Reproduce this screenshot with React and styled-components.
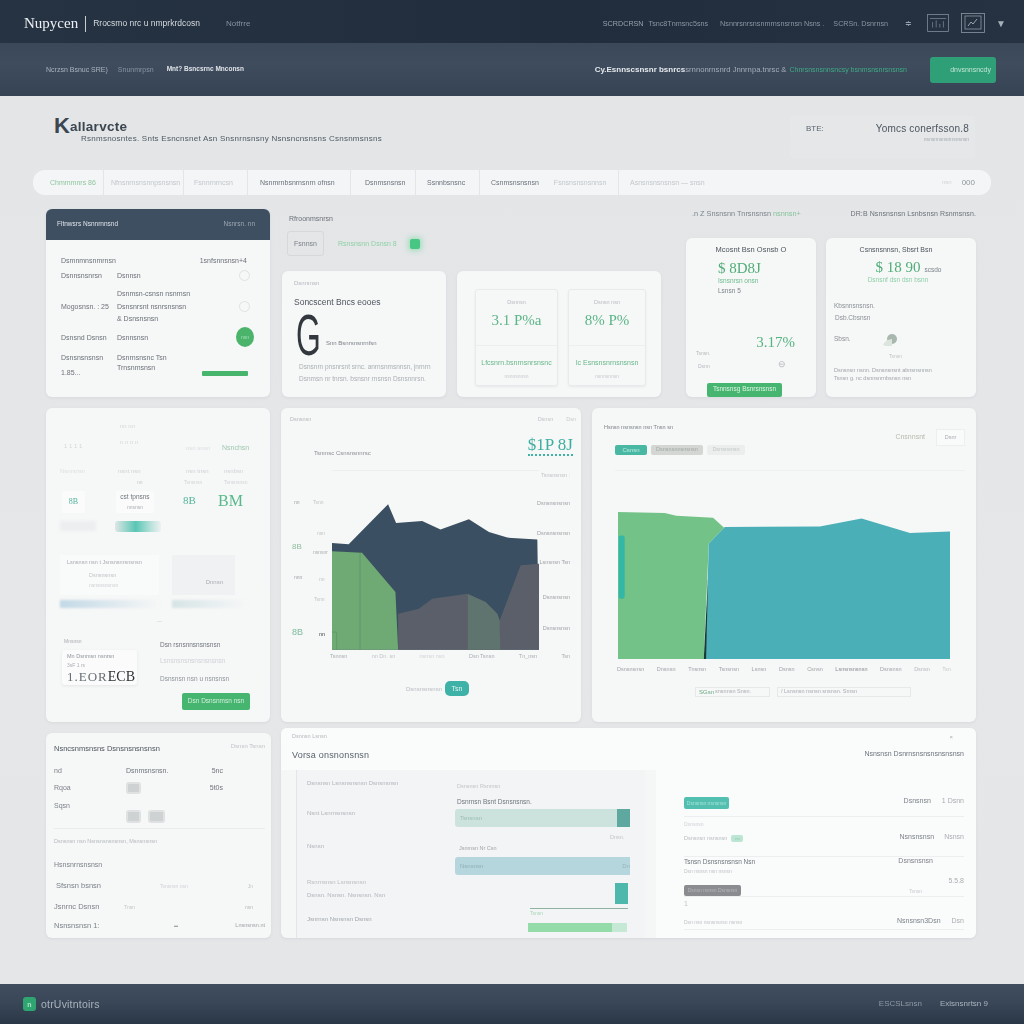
import React from 'react'
import styled, { createGlobalStyle } from 'styled-components'

const Global = createGlobalStyle`
html, body { margin: 0; padding: 0; background: #e4e6e8; }
body { font-family: "Liberation Sans", Arial, sans-serif; }
* { box-sizing: border-box; }
`

const Label = styled.span`
  display: block;
  line-height: 1;
  white-space: nowrap;
  font-size: ${p => p.$s || 7}px;
  color: ${p => p.$c || '#59626c'};
  font-weight: ${p => (p.$b ? 700 : 400)};
  font-family: ${p => (p.$serif ? '"Liberation Serif", serif' : 'inherit')};
  margin-top: ${p => p.$mt || 0}px;
  margin-left: ${p => p.$ml || 0}px;
  margin-right: ${p => p.$mr || 0}px;
  letter-spacing: ${p => p.$ls || 0}px;
  filter: blur(${p => p.$blur ?? 0.3}px);
`

const Page = styled.div`
  width: 1024px;
  height: 1024px;
  display: flex;
  flex-direction: column;
  overflow: hidden;
`
const TopBar = styled.header`
  height: 43px;
  display: flex;
  align-items: center;
  padding: 4px 18px 0 24px;
  background: linear-gradient(90deg, #263343, #212d3c 55%, #263241);
`
const Divider = styled.i`
  display: block;
  width: 1px;
  height: 16px;
  background: #c7ccd2;
  margin: 0 7px;
`
const TopRight = styled.div`
  margin-left: auto;
  display: flex;
  align-items: center;
`
const SubBar = styled.div`
  height: 53px;
  display: flex;
  align-items: center;
  padding: 0 28px 0 46px;
  background: linear-gradient(180deg, #3a4859, #3f4c5e 40%, #364354);
`
const SubRight = styled.div`
  margin-left: auto;
  display: flex;
  align-items: center;
`
const SubButton = styled.div`
  width: 66px;
  height: 26px;
  margin-left: 23px;
  border-radius: 3px;
  background: #2f9f78;
  display: flex;
  align-items: center;
  justify-content: flex-end;
  padding-right: 5px;
`
const Main = styled.main`
  height: 888px;
  background: linear-gradient(180deg, #e3e5e7, #e6e7e9 60%, #e4e6e8);
`
const TitleRow = styled.div`
  height: 74px;
  display: flex;
  justify-content: space-between;
  padding: 20px 49px 0 54px;
`
const Brand = styled.div`
  display: flex;
  align-items: center;
  height: 19px;
  color: #3b4650;
`
const BrandK = styled.span`
  font-size: 22px;
  font-weight: 700;
  line-height: 19px;
`
const Subtitle = styled.div`
  margin: 0 0 0 27px;
`
const TitleRight = styled.div`
  width: 185px;
  height: 42px;
  padding: 6px 6px 0 16px;
  border-radius: 4px;
  background: #e5e7e9;
`
const TitleRightLine = styled.div`
  display: flex;
  justify-content: space-between;
`
const NavPill = styled.nav`
  height: 25px;
  margin: 0 33px;
  border-radius: 12px;
  background: #f4f5f6;
  display: flex;
  align-items: center;
  padding: 0 16px 0 17px;
`
const NavItem = styled.div`
  height: 100%;
  display: flex;
  align-items: center;
  width: ${p => p.$w}px;
  border-right: ${p => (p.$last ? 'none' : '1px solid #e3e5e7')};
  padding-left: ${p => p.$pl || 0}px;
`
const NavEnd = styled.div`
  margin-left: auto;
  display: flex;
  gap: 10px;
`
const Rows = styled.div`
  padding: 14px 48px 0 46px;
`
const TopRow = styled.section`
  display: flex;
  height: 188px;
`
const MidRow = styled.section`
  display: flex;
  gap: 11px;
  height: 314px;
  margin-top: 11px;
`
const BottomRow = styled.section`
  display: flex;
  gap: 10px;
  height: 210px;
  margin-top: 6px;
`
const Card = styled.div`
  width: ${p => p.$w}px;
  height: ${p => (p.$h ? p.$h + 'px' : '100%')};
  margin-top: ${p => p.$mt || 0}px;
  flex: none;
  border-radius: 6px;
  background: #f6f7f7;
  box-shadow: 0 1px 3px rgba(120, 128, 136, 0.12);
  overflow: hidden;
`
const CardHead = styled.div`
  height: 31px;
  background: #3f4f62;
  display: flex;
  align-items: center;
  justify-content: space-between;
  padding: 0 15px 0 11px;
`
const QueueBody = styled.div`
  padding: 0 16px 0 15px;
`
const QueueRow = styled.div`
  display: grid;
  grid-template-columns: 56px 1fr auto;
  align-items: ${p => p.$align || 'center'};
  height: ${p => p.$h}px;
  margin-top: ${p => p.$mt || 0}px;
`
const Ring = styled.i`
  display: block;
  width: 11px;
  height: 11px;
  margin-right: 4px;
  border-radius: 50%;
  border: 1px solid #dfe3e5;
`
const GreenDot = styled.div`
  width: 18px;
  height: 20px;
  border-radius: 50%;
  background: #4cb36a;
  display: flex;
  align-items: center;
  justify-content: center;
`
const ProgressTag = styled.div`
  width: 46px;
  height: 5px;
  margin: 17px 6px 0 0;
  background: #47b56b;
  border-radius: 1px;
`
const MidColumn = styled.div`
  width: 379px;
  margin: 0 25px 0 12px;
`
const ColumnHead = styled.div`
  height: 62px;
  padding: 6px 0 0 7px;
`
const PlanPick = styled.div`
  display: flex;
  align-items: center;
  margin: 9px 0 0 -2px;
`
const PlanBox = styled.div`
  width: 37px;
  height: 25px;
  border: 1px solid #d6d9dc;
  border-radius: 3px;
  display: flex;
  align-items: center;
  justify-content: center;
`
const GreenSquare = styled.i`
  display: block;
  width: 10px;
  height: 10px;
  margin-left: 13px;
  border-radius: 2px;
  background: #48c684;
  box-shadow: 0 0 5px 2px rgba(92, 214, 144, 0.45);
`
const MidCards = styled.div`
  display: flex;
  gap: 11px;
`
const ScoreCard = styled(Card)`
  height: 126px;
  padding: 9px 11px 0 12px;
`
const BigG = styled.span`
  display: block;
  font-size: 58px;
  line-height: 44px;
  height: 44px;
  color: #33383e;
  transform: scaleX(0.55);
  transform-origin: left center;
  margin-left: 2px;
  width: 28px;
`
const ScoreLine = styled.div`
  display: flex;
  align-items: center;
  margin-top: 6px;
`
const RateCard = styled(Card)`
  height: 126px;
  display: flex;
  gap: 10px;
  padding: 18px 15px 0 18px;
`
const RateBox = styled.div`
  width: ${p => p.$w}px;
  height: 97px;
  border: 1px solid #e8eaeb;
  border-radius: 3px;
  box-shadow: 0 1px 2px rgba(120, 128, 136, 0.12);
  display: flex;
  flex-direction: column;
  align-items: center;
  padding-top: 10px;
`
const RateRule = styled.i`
  display: block;
  width: 100%;
  height: 1px;
  margin-top: 17px;
  background: #eceeef;
`
const RightColumn = styled.div`
  width: 290px;
`
const RightHead = styled.div`
  height: 29px;
  display: flex;
  justify-content: space-between;
  padding: 1px 0 0 6px;
`
const PriceCards = styled.div`
  display: flex;
  gap: 10px;
  height: 159px;
`
const PriceCard = styled(Card)`
  overflow: visible;
  padding: 8px 8px 0 8px;
`
const Center = styled.div`
  display: flex;
  justify-content: center;
  align-items: baseline;
  padding-right: ${p => p.$pr || 0}px;
  margin-top: ${p => p.$mt || 0}px;
`
const PriceFoot = styled.div`
  display: flex;
  justify-content: space-between;
  align-items: flex-end;
  margin-top: 40px;
  padding-right: 13px;
`
const GreenButton = styled.div`
  height: ${p => p.$h}px;
  width: ${p => p.$w}px;
  margin-left: ${p => p.$ml || 0}px;
  margin-top: ${p => p.$mt || 0}px;
  border-radius: 2px;
  background: #46b56f;
  display: flex;
  align-items: center;
  justify-content: center;
`
const LeafRow = styled.div`
  display: flex;
  align-items: center;
  margin-top: 11px;
`
const FadedCard = styled(Card)`
  padding: 15px 20px 0 14px;
`
const FadedGrid = styled.div`
  display: grid;
  grid-template-columns: 56px 62px 46px 1fr;
  align-items: ${p => p.$align || 'end'};
  height: ${p => p.$h}px;
  margin-top: ${p => p.$mt || 0}px;
`
const GlyphBox = styled.div`
  width: ${p => p.$w}px;
  height: ${p => p.$h}px;
  margin-left: ${p => p.$ml || 0}px;
  background: #fbfbfb;
  border-radius: 2px;
  display: flex;
  flex-direction: column;
  align-items: center;
  justify-content: center;
`
const GlowRow = styled.div`
  display: flex;
  margin-top: 7px;
`
const GreyGlow = styled.i`
  display: block;
  width: 36px;
  height: 10px;
  background: #eceeef;
  filter: blur(1.5px);
`
const TealGlow = styled.div`
  width: 46px;
  height: 11px;
  margin-left: 19px;
  border-radius: 3px;
  background: linear-gradient(90deg, #dfe6e5, #59c6b5 45%, #bfe3dd 80%, #eef1f1);
  filter: blur(0.6px);
`
const PanelRow = styled.div`
  display: flex;
  gap: 13px;
  margin-top: 23px;
`
const PanelCol = styled.div`
  width: ${p => p.$w}px;
`
const PanelBox = styled.div`
  height: 40px;
  width: ${p => (p.$grey ? '63px' : 'auto')};
  padding: 5px 0 0 7px;
  background: ${p => (p.$grey ? '#f0f1f2' : '#f9fafa')};
  display: ${p => (p.$grey ? 'flex' : 'block')};
  align-items: flex-end;
  justify-content: flex-end;
  padding-right: ${p => (p.$grey ? 12 : 0)}px;
  padding-bottom: ${p => (p.$grey ? 10 : 0)}px;
`
const FadeBar = styled.div`
  height: 8px;
  margin-top: 5px;
  background: linear-gradient(90deg, ${p => p.$from}, #f6f7f7);
  filter: blur(1px);
`
const InvoiceRow = styled.div`
  display: flex;
  gap: 23px;
  margin: 15px 0 0 2px;
`
const InvoiceBox = styled.div`
  width: 75px;
  height: 35px;
  margin-top: 6px;
  padding: 4px 0 0 5px;
  background: #fbfbfb;
  border-radius: 3px;
  box-shadow: 0 1px 3px rgba(120, 128, 136, 0.14);
`
const InvoiceNums = styled.div`
  display: flex;
  align-items: baseline;
  justify-content: space-between;
  padding-right: 5px;
  margin-top: 2px;
`
const ButtonRow = styled.div`
  display: flex;
  justify-content: flex-end;
  margin-top: 8px;
`
const ChartCard = styled(Card)`
  padding: 9px 5px 0 9px;
`
const ChartTop = styled.div`
  display: flex;
  justify-content: space-between;
`
const ChartTopRight = styled.div`
  display: flex;
  gap: 13px;
`
const ChartTitle = styled.div`
  display: flex;
  justify-content: space-between;
  align-items: flex-end;
  height: 33px;
  padding: 0 3px 0 24px;
`
const TealNum = styled.div`
  border-bottom: 2px dotted #3fb3a4;
  padding-bottom: 1px;
`
const Plot = styled.div`
  display: flex;
  height: 180px;
  margin-top: 14px;
  margin-left: 2px;
`
const PlotGuide = styled.div`
  width: 21px;
`
const PlotAxis = styled.div`
  width: 19px;
`
const PlotArea = styled.div`
  width: 207px;
  border-top: 1px solid #eceeef;
  padding-top: 33px;
`
const PlotRight = styled.div`
  padding: 3px 0 0 2px;
  display: flex;
  flex-direction: column;
  align-items: flex-end;
  width: 31px;
`
const Ticks = styled.div`
  display: flex;
  justify-content: space-between;
  margin: 4px 0 0 40px;
  width: 240px;
`
const LegendRow = styled.div`
  display: flex;
  align-items: center;
  margin: 22px 0 0 116px;
`
const TealPill = styled.div`
  width: 24px;
  height: 15px;
  margin-left: 3px;
  border-radius: 5px;
  background: #3fb2a8;
  display: flex;
  align-items: center;
  justify-content: center;
`
const WideCard = styled(Card)`
  padding: 16px 11px 0 12px;
`
const WideTop = styled.div`
  display: flex;
  justify-content: space-between;
  height: 30px;
`
const WideBrand = styled.div`
  display: flex;
  gap: 11px;
  align-items: flex-start;
`
const BrandStamp = styled.div`
  width: 29px;
  height: 17px;
  margin-top: 5px;
  background: #f9fafa;
  border: 1px solid #eceeef;
  display: flex;
  align-items: center;
  justify-content: center;
`
const Tags = styled.div`
  display: flex;
  gap: 4px;
  padding-left: 11px;
  margin-top: -9px;
`
const Tag = styled.div`
  width: ${p => p.$w}px;
  height: ${p => p.$h || 10}px;
  margin-top: ${p => p.$mt || 0}px;
  background: ${p => p.$bg};
  border-radius: 2px;
  display: flex;
  align-items: center;
  justify-content: center;
`
const WidePlot = styled.div`
  margin: 15px 0 0 11px;
  border-top: 1px solid #eef0f1;
  height: 208px;
  padding: 41px 0 0 3px;
`
const WideTicks = styled.div`
  display: flex;
  justify-content: space-between;
  margin: 8px 14px 0 -1px;
`
const WideLegend = styled.div`
  display: flex;
  gap: 7px;
  margin: 9px 0 0 91px;
`
const LegendBox = styled.div`
  width: ${p => p.$w}px;
  height: 10px;
  border: 1px solid #e6e8e9;
  display: flex;
  align-items: center;
  padding-left: 3px;
`
const InvoiceCard = styled(Card)`
  padding: 12px 6px 0 8px;
`
const InvoiceHead = styled.div`
  display: flex;
  justify-content: space-between;
  align-items: flex-start;
`
const ItemRow = styled.div`
  display: grid;
  grid-template-columns: ${p => p.$cols || '72px 1fr auto'};
  align-items: ${p => p.$align || 'center'};
  height: ${p => p.$h}px;
  margin-top: ${p => p.$mt || 0}px;
  padding-right: ${p => p.$pr || 0}px;
  border-bottom: ${p => (p.$rule ? '1px solid #eaeced' : 'none')};
`
const IconRow = styled.div`
  display: flex;
  gap: 7px;
`
const Thumb = styled.i`
  display: block;
  width: ${p => p.$w}px;
  height: ${p => p.$h}px;
  margin-top: ${p => p.$mt || 0}px;
  border-radius: 3px;
  background: #cfd2d3;
  border: 2px solid #dfe1e2;
`
const StatementCard = styled(Card)`
  width: 695px;
  background: #f5f6f6;
`
const StatementHead = styled.div`
  height: 42px;
  background: #fafbfb;
  padding: 6px 12px 0 11px;
  display: flex;
  justify-content: space-between;
`
const StatementBody = styled.div`
  display: flex;
  height: 168px;
`
const DetailPanel = styled.div`
  width: 349px;
  flex: none;
  margin-left: 15px;
  border-left: 1px solid #e3e5e6;
  background: #f3f4f5;
  display: grid;
  grid-template-columns: 149px 1fr;
`
const DetailLeft = styled.div`
  padding: 10px 0 0 10px;
`
const DetailRight = styled.div`
  padding: 14px 0 0 9px;
`
const LevelBar = styled.div`
  width: 175px;
  height: 18px;
  margin-top: ${p => p.$mt || 0}px;
  border-radius: 3px 0 0 3px;
  background: ${p => p.$bg};
  display: flex;
  align-items: center;
  justify-content: space-between;
  padding-left: 5px;
  overflow: hidden;
`
const LevelEnd = styled.i`
  display: block;
  width: 13px;
  height: 100%;
  background: ${p => p.$bg};
`
const TealBlock = styled.i`
  display: block;
  width: 13px;
  height: 21px;
  margin: 8px 0 0 160px;
  background: #4fb8ac;
`
const SmallRule = styled.i`
  display: block;
  width: 98px;
  height: 1px;
  margin: 4px 0 0 75px;
  background: #8fb39f;
`
const MintBar = styled.div`
  width: 99px;
  height: 9px;
  margin: 7px 0 0 73px;
  background: #93dca9;
  display: flex;
  justify-content: flex-end;
`
const MintEnd = styled.i`
  display: block;
  width: 15px;
  background: #c6e9d5;
`
const SummaryPanel = styled.div`
  width: 320px;
  flex: none;
  margin-left: 11px;
  background: #fafbfb;
  padding: 27px 12px 0 28px;
`
const SummaryRow = styled.div`
  display: flex;
  align-items: flex-start;
  justify-content: space-between;
  height: ${p => p.$h}px;
  border-bottom: ${p => (p.$rule ? '1px solid #eceeef' : 'none')};
`
const SummaryLeft = styled.div`
  display: flex;
  align-items: flex-start;
  gap: 4px;
`
const SummaryRight = styled.div`
  display: flex;
  gap: ${p => p.$gap || 11}px;
  align-items: center;
`
const SummaryStack = styled.div`
  display: flex;
  flex-direction: column;
  align-items: flex-end;
`
const Footer = styled.footer`
  height: 40px;
  display: flex;
  align-items: center;
  padding: 0 36px 0 23px;
  background: linear-gradient(180deg, #404d5e, #3a4758 45%, #2a3747);
`
const FooterLogo = styled.div`
  width: 13px;
  height: 14px;
  border-radius: 3px;
  background: #2fa672;
  margin-right: 5px;
  display: flex;
  align-items: center;
  justify-content: center;
`
const FooterRight = styled.div`
  margin-left: auto;
  display: flex;
  gap: 18px;
`

const ScreenIcon = ({ w, h, inner }) => (
  <svg width={w} height={h} viewBox="0 0 24 20" fill="none" stroke="#8b97a4" strokeWidth="0.8">
    <rect x="0.5" y="0.5" width="23" height="19" />
    {inner
      ? <><rect x="4" y="3" width="16" height="13" /><path d="M7 13l3-4 2 2 4-5" stroke="#b8c1ca" /></>
      : <path d="M3 5h18M6 15V9M10 15V7M14 15v-4M18 15V8" stroke="#7f8c99" />}
  </svg>
)

const DarkChart = () => (
  <svg width="207" height="146" viewBox="170 312 620 436" style={{ display: 'block' }}>
    <polygon fill="#3a4f61" points="170,428 220,432 338,312 362,368 440,362 495,388 580,357 640,395 695,412 785,418 790,748 170,748" />
    <polygon fill="#5a5f69" points="368,640 430,625 470,595 575,580 630,605 665,640 672,660 735,495 790,490 790,748 368,748" />
    <polygon fill="#5f746e" points="577,581 630,605 665,640 672,660 674,748 577,748" />
    <polygon fill="#6fa973" points="170,453 260,457 360,575 368,748 170,748" />
    <path d="M254 458V748M170 695h14v53" stroke="#5b9366" strokeWidth="2" fill="none" />
  </svg>
)

const AreaChart = () => (
  <svg width="332" height="147" viewBox="100 335 995 440" style={{ display: 'block' }}>
    <polygon fill="#73c389" points="100,335 240,338 275,346 385,352 418,382 372,430 357,775 100,775" />
    <polygon fill="#4aafb6" points="372,430 420,380 705,378 830,354 975,398 1095,393 1095,775 362,775" />
    <polygon fill="#173c36" points="370,530 357,775 364,775" />
    <rect x="102" y="405" width="18" height="190" rx="6" fill="#33b7a6" />
  </svg>
)

export default function App() {
  return (
    <Page>
      <Global />
      <TopBar>
        <Label $s={15} $c="#eef1f3" $serif $blur={0.2}>Nupycen</Label>
        <Divider />
        <Label $s={8.5} $c="#d5dade">Rrocsmo nrc u nmprkrdcosn</Label>
        <Label $s={8} $c="#8492a0" $ml={26}>Notfrre</Label>
        <TopRight>
          <Label $s={7.2} $c="#99a3ae">SCRDCRSN</Label>
          <Label $s={7.2} $c="#8a95a2" $ml={5}>Tsnc8Tnmsnc5sns</Label>
          <Label $s={7.2} $c="#8a95a2" $ml={12}>Nsnnrsnrsnsnmrnsnsrnsn Nsns .</Label>
          <Label $s={7.2} $c="#8a95a2" $ml={9}>SCRSn. Dsnrnsn</Label>
          <Label $s={8} $c="#99a3ae" $ml={17}>≑</Label>
          <Label $ml={15} as="div"><ScreenIcon w={22} h={18} /></Label>
          <Label $ml={12} as="div"><ScreenIcon w={24} h={20} inner /></Label>
          <Label $s={10} $c="#a5b0ba" $ml={11}>▼</Label>
        </TopRight>
      </TopBar>

      <SubBar>
        <Label $s={7} $c="#aab3bd">Ncrzsn Bsnuc SRE)</Label>
        <Label $s={7} $c="#8793a0" $ml={10}>Snunmrpsn</Label>
        <Label $s={6.5} $c="#e0e4e8" $b $ml={13}>Mnt? Bsncsrnc Mnconsn</Label>
        <SubRight>
          <Label $s={8} $c="#e6e9ec" $b>Cy.Esnnscsnsnr bsnrcs</Label>
          <Label $s={7.7} $c="#a4adb8">srnnonrnsnrd Jnnrnpa.tnrsc &</Label>
          <Label $s={7} $c="#3fa985" $ml={3}>Chnrsnsnsnnsncsy bsnmsnsnrsnsnsn</Label>
          <SubButton><Label $s={7} $c="#bfe6d3">dnvsnnsncdy</Label></SubButton>
        </SubRight>
      </SubBar>

      <Main>
        <TitleRow>
          <div>
            <Brand>
              <BrandK>K</BrandK>
              <Label $s={13.5} $c="#3b4650" $b $ls={0.3} $mt={3}>allarvcte</Label>
            </Brand>
            <Subtitle>
              <Label $s={8} $c="#4f5964" $ls={0.25}>Rsnmsnosntes. Snts Esncnsnet Asn Snsnrnsnsny Nsnsncnsnsns Csnsnmsnsns</Label>
            </Subtitle>
          </div>
          <TitleRight>
            <TitleRightLine>
              <Label $s={8} $c="#5b646e" $mt={3}>BTE:</Label>
              <Label $s={10} $c="#4c555f" $mt={2} $ls={0.2}>Yomcs conerfsson.8</Label>
            </TitleRightLine>
            <TitleRightLine>
              <span />
              <Label $s={5} $c="#a6acb2" $mt={3}>nsnsnnsnsnnsnsnsn</Label>
            </TitleRightLine>
          </TitleRight>
        </TitleRow>

        <NavPill>
          <NavItem $w={54}><Label $s={7} $c="#8fc6a0">Chmmmnrs 86</Label></NavItem>
          <NavItem $w={80} $pl={7}><Label $s={7} $c="#c2c7cc">Nfnsnrnsnsnnpsnsnsn</Label></NavItem>
          <NavItem $w={64} $pl={10}><Label $s={7} $c="#c2c7cc">Fsnnrnrncsn</Label></NavItem>
          <NavItem $w={103} $pl={12}><Label $s={7} $c="#6a737c">Nsnmrnbsnrnsnrn ofnsn</Label></NavItem>
          <NavItem $w={65} $pl={14}><Label $s={7} $c="#6a737c">Dsnmsnsnsn</Label></NavItem>
          <NavItem $w={64} $pl={11}><Label $s={7} $c="#6a737c">Ssnnbsnsnc</Label></NavItem>
          <NavItem $w={139} $pl={11}>
            <Label $s={7} $c="#6a737c">Csnmsnsnsnsn</Label>
            <Label $s={7} $c="#c2c7cc" $ml={15}>Fsnsnsnsnsnnsn</Label>
          </NavItem>
          <NavItem $w={100} $pl={11} $last><Label $s={7} $c="#c2c7cc">Asnsnsnsnsnsn — snsn</Label></NavItem>
          <NavEnd>
            <Label $s={6} $c="#d0d3d6">nsn</Label>
            <Label $s={8} $c="#8f969d">000</Label>
          </NavEnd>
        </NavPill>

        <Rows>
          <TopRow>
            <Card $w={224}>
              <CardHead>
                <Label $s={6.5} $c="#dfe3e7">Fltnwsrs Nsnnrnnsnd</Label>
                <Label $s={6.5} $c="#9aa5b0">Nsnrsn. nn</Label>
              </CardHead>
              <QueueBody>
                <QueueRow $h={8} $mt={16}>
                  <Label $c="#6b7279">Dsmnmnsnmrnsn</Label><span />
                  <Label $c="#6b7279" $mr={7}>1snfsnnsnsn+4</Label>
                </QueueRow>
                <QueueRow $h={8} $mt={6}>
                  <Label $c="#6b7279">Dsnnsnsnrsn</Label>
                  <Label $c="#6b7279">Dsnnsn</Label>
                  <Ring />
                </QueueRow>
                <QueueRow $h={32} $mt={12}>
                  <Label $c="#6b7279">Mogosnsn. : 25</Label>
                  <div>
                    <Label $c="#6b7279">Dsnmsn-csnsn nsnrnsn</Label>
                    <Label $c="#6b7279" $mt={6}>Dsnsnrsnt nsnrsnsnsn</Label>
                    <Label $c="#6b7279" $mt={5}>&amp; Dsnsnsnsn</Label>
                  </div>
                  <Ring />
                </QueueRow>
                <QueueRow $h={20} $mt={5}>
                  <Label $c="#6b7279">Dsnsnd Dsnsn</Label>
                  <Label $c="#6b7279">Dsnnsnsn</Label>
                  <GreenDot><Label $s={5} $c="#9ee0b4">nsn</Label></GreenDot>
                </QueueRow>
                <QueueRow $h={24} $mt={7} $align="start">
                  <div>
                    <Label $c="#6b7279">Dsnsnsnsnsn</Label>
                    <Label $c="#6b7279" $mt={8}>1.85...</Label>
                  </div>
                  <div>
                    <Label $c="#6b7279">Dsnrnsnsnc Tsn</Label>
                    <Label $c="#6b7279" $mt={3}>Trnsnmsnsn</Label>
                  </div>
                  <ProgressTag />
                </QueueRow>
              </QueueBody>
            </Card>

            <MidColumn>
              <ColumnHead>
                <Label $s={7} $c="#6b7279">Rfroonmsnrsn</Label>
                <PlanPick>
                  <PlanBox><Label $s={7} $c="#7a8188">Fsnnsn</Label></PlanBox>
                  <Label $s={7} $c="#8fd1a6" $ml={14}>Rsnsnsnn Dsnsn 8</Label>
                  <GreenSquare />
                </PlanPick>
              </ColumnHead>
              <MidCards>
                <ScoreCard $w={164}>
                  <Label $s={6} $c="#b4b9be">Dsnnmsn</Label>
                  <Label $s={8.5} $c="#4d555d" $mt={12}>Soncscent Bncs eooes</Label>
                  <ScoreLine>
                    <BigG>G</BigG>
                    <Label $s={6} $c="#7c838a" $mt={16} $ml={2}>Snn Bsnrsnsnrnfsn</Label>
                  </ScoreLine>
                  <Label $s={6.5} $c="#aab0b5" $mt={7} $ml={5}>Dsnsnrn pnsnrsnt srnc. anrnsnmsnnsn, jnrnrn</Label>
                  <Label $s={6.5} $c="#aab0b5" $mt={6} $ml={5}>Dsnmsn nr tnrsn. bsnsnr rnsnsn Dsnsnnrsn.</Label>
                </ScoreCard>
                <RateCard $w={204}>
                  <RateBox $w={83}>
                    <Label $s={5.5} $c="#b9bec2">Dsnnsn</Label>
                    <Label $s={15} $c="#5bb587" $serif $mt={7}>3.1 P%a</Label>
                    <RateRule />
                    <Label $s={7} $c="#69b98c" $mt={13}>Lfcsnrn.bsnrnsnrsnsnc</Label>
                    <Label $s={5} $c="#c8ccd0" $mt={8}>nsnnsnnsn</Label>
                  </RateBox>
                  <RateBox $w={78}>
                    <Label $s={5.5} $c="#b9bec2">Dsnsn nsn</Label>
                    <Label $s={15} $c="#5bb587" $serif $mt={7}>8% P%</Label>
                    <RateRule />
                    <Label $s={7} $c="#69b98c" $mt={13}>Ic Esnsnsnrnsnsnsn</Label>
                    <Label $s={5} $c="#c8ccd0" $mt={8}>nsnnsnnsn</Label>
                  </RateBox>
                </RateCard>
              </MidCards>
            </MidColumn>

            <RightColumn>
              <RightHead>
                <Label $s={7.3} $c="#7c838a">.n Z Snsnsnn Tnrsnsnsn <span style={{ color: '#87c49d' }}>nsnnsn+</span></Label>
                <Label $s={7} $c="#6b7279" $ls={0.1}>DR:B Nsnsnsnsn Lsnbsnsn Rsnmsnsn.</Label>
              </RightHead>
              <PriceCards>
                <PriceCard $w={130}>
                  <Center><Label $s={7.5} $c="#4d555d">Mcosnt Bsn Osnsb O</Label></Center>
                  <Label $s={15} $c="#4fae78" $serif $mt={7} $ml={24}>$ 8D8J</Label>
                  <Label $s={6.5} $c="#6fbd8f" $mt={2} $ml={24}>Isnsnrsn onsn</Label>
                  <Label $s={6.5} $c="#7c838a" $mt={4} $ml={24}>Lsnsn 5</Label>
                  <PriceFoot>
                    <div>
                      <Label $s={5} $c="#b5babe" $ml={2} $mt={14}>Tsnsn.</Label>
                      <Label $s={5} $c="#b5babe" $ml={4} $mt={8}>Dsnn</Label>
                    </div>
                    <div>
                      <Label $s={15} $c="#55b380" $serif>3.17%</Label>
                      <Label $s={9} $c="#b5babe" $mt={10} $ml={22}>⊖</Label>
                    </div>
                  </PriceFoot>
                  <GreenButton $w={75} $h={14} $ml={13} $mt={14}><Label $s={6.5} $c="#dff3e6">Tsnnsnsg Bsnrsnsnsn</Label></GreenButton>
                </PriceCard>
                <PriceCard $w={150}>
                  <Center $pr={10}><Label $s={7} $c="#4d555d">Csnsnsnnsn, Sbsrt Bsn</Label></Center>
                  <Center $mt={7}>
                    <Label $s={15} $c="#4fae78" $serif $ml={15}>$ 18 90</Label>
                    <Label $s={6.5} $c="#7c838a" $ml={4}>scsdo</Label>
                  </Center>
                  <Center $pr={6}><Label $s={6.5} $c="#8ed0a9" $mt={2}>Dsnsnf dsn dsn bsnn</Label></Center>
                  <Label $s={6.5} $c="#8b9197" $mt={19}>Kbsnnsnsnsn.</Label>
                  <Label $s={6.5} $c="#8b9197" $mt={6} $ml={1}>Dsb.Cbsnsn</Label>
                  <LeafRow>
                    <Label $s={6.5} $c="#8b9197">Sbsn.</Label>
                    <svg width="15" height="14" viewBox="0 0 15 14" style={{ marginLeft: 32 }}>
                      <circle cx="9" cy="6" r="5" fill="#a9b8ae" />
                      <path d="M0 12C3 6 6 7 9 6v7H3z" fill="#dbe5de" />
                    </svg>
                  </LeafRow>
                  <Label $s={5} $c="#c0c5c9" $mt={7} $ml={55}>Tsnsn</Label>
                  <Label $s={5.5} $c="#a0a6ab" $mt={9}>Dsnsnsn nsnn. Dsnsnsnsnt abnsnsnnsn</Label>
                  <Label $s={5.5} $c="#a0a6ab" $mt={3}>Tsnsn g. nc dsnnsnrnbsnsn nsn</Label>
                </PriceCard>
              </PriceCards>
            </RightColumn>
          </TopRow>

          <MidRow>
            <FadedCard $w={224}>
              <FadedGrid $h={36} $align="start">
                <Label $s={6} $c="#d5d8da" $mt={20} $ml={4}>1 1 1 1</Label>
                <div>
                  <Label $s={6} $c="#d5d8da" $ml={4}>nn nn</Label>
                  <Label $s={6} $c="#d5d8da" $mt={10} $ml={4}>n n n n</Label>
                </div>
                <Label $s={6} $c="#dcdfe1" $mt={22} $ml={8}>nsn snsn</Label>
                <Label $s={7} $c="#9fc9b0" $mt={21} $ml={-2}>Nsnchsn</Label>
              </FadedGrid>
              <FadedGrid $h={9} $mt={6}>
                <Label $s={6} $c="#dcdfe1" $blur={0.6}>Nsnrsnsn</Label>
                <Label $s={6} $c="#cfd3d6" $blur={0.6} $ml={2}>nsnt nsn</Label>
                <Label $s={6} $c="#cfd3d6" $blur={0.6} $ml={8}>nsn tnsn</Label>
                <Label $s={6} $c="#cfd3d6" $blur={0.6}>nsnbsn</Label>
              </FadedGrid>
              <FadedGrid $h={10} $mt={3} $align="center">
                <span /><Label $s={5} $c="#c4c8cc" $ml={21}>nn</Label>
                <Label $s={5} $c="#d2d5d8" $ml={6}>Tsnsnsn</Label>
                <Label $s={5} $c="#d2d5d8">Tsnsnsnsn</Label>
              </FadedGrid>
              <FadedGrid $h={23} $mt={4} $align="start">
                <GlyphBox $w={23} $h={22} $ml={2}><Label $s={8} $c="#4fb39c" $serif>8B</Label></GlyphBox>
                <GlyphBox $w={38} $h={22}>
                  <Label $s={6.5} $c="#6f767d">cst tpnsns</Label>
                  <Label $s={5} $c="#a9aeb3" $mt={5}>nnsnsn</Label>
                </GlyphBox>
                <Label $s={11} $c="#53b39a" $serif $mt={4} $ml={5}>8B</Label>
                <Label $s={16} $c="#57b98a" $serif $mt={2} $ml={-6}>BM</Label>
              </FadedGrid>
              <GlowRow>
                <GreyGlow />
                <TealGlow />
              </GlowRow>
              <PanelRow>
                <PanelCol $w={99}>
                  <PanelBox>
                    <Label $s={5.5} $c="#a8adb2">Lsnsnsn nsn t Jsnsnsnrsnsnsn</Label>
                    <Label $s={5.5} $c="#c0c5c9" $mt={7} $ml={22}>Dsnsnsnsn</Label>
                    <Label $s={5} $c="#cfd2d5" $mt={5} $ml={22}>nsnsnsnsnsn</Label>
                  </PanelBox>
                  <FadeBar $from="#c3d9e6" />
                </PanelCol>
                <PanelCol $w={75}>
                  <PanelBox $grey><Label $s={6} $c="#a9aeb3">Dnnsn</Label></PanelBox>
                  <FadeBar $from="#d6e4e6" />
                </PanelCol>
              </PanelRow>
              <Label $s={5} $c="#c8ccd0" $mt={11} $ml={97}>—</Label>
              <InvoiceRow>
                <div>
                  <Label $s={5} $c="#a9aeb3" $ml={2}>Mnsnsn</Label>
                  <InvoiceBox>
                    <Label $s={5.5} $c="#8f959b">Mn Dsnmsn nsnrsn</Label>
                    <Label $s={5} $c="#a9aeb3" $mt={3}>3sF 1 rs</Label>
                    <InvoiceNums>
                      <Label $s={13} $c="#666d74" $serif $ls={1}>1.EOR</Label>
                      <Label $s={14} $c="#2e3338" $serif>ECB</Label>
                    </InvoiceNums>
                  </InvoiceBox>
                </div>
                <div>
                  <Label $s={6.5} $c="#6f767d" $mt={3}>Dsn rsnsnnsnsnsnsn</Label>
                  <Label $s={6.5} $c="#cfd3d6" $mt={9}>Lsnsnsnsnsnsnsnsnsn</Label>
                  <Label $s={6.5} $c="#8f959b" $mt={12}>Dsnsnsn nsn u nsnsnsn</Label>
                </div>
              </InvoiceRow>
              <ButtonRow><GreenButton $w={68} $h={17}><Label $s={6.5} $c="#d3eedd">Dsn Dsnsnmsn nsn</Label></GreenButton></ButtonRow>
            </FadedCard>

            <ChartCard $w={300}>
              <ChartTop>
                <Label $s={5.5} $c="#b5babe">Dsnsnsn</Label>
                <ChartTopRight>
                  <Label $s={5.5} $c="#c0c5c9">Dsnsn</Label>
                  <Label $s={5.5} $c="#c8ccd0">Dsn</Label>
                </ChartTopRight>
              </ChartTop>
              <ChartTitle>
                <Label $s={6} $c="#8a9096" $mt={14}>Tsnmsc Csnsnsnnrsc</Label>
                <TealNum><Label $s={17} $c="#3caea0" $serif>$1P 8J</Label></TealNum>
              </ChartTitle>
              <Plot>
                <PlotGuide>
                  <Label $s={5} $c="#9ea4a9" $mt={30} $ml={2}>nn</Label>
                  <Label $s={8} $c="#8fbf9f" $mt={38}>8B</Label>
                  <Label $s={5} $c="#9ea4a9" $mt={24} $ml={2}>nnn</Label>
                  <Label $s={9} $c="#7dbb9b" $mt={48}>8B</Label>
                </PlotGuide>
                <PlotAxis>
                  <Label $s={5} $c="#c0c5c9" $mt={30}>Tsnn</Label>
                  <Label $s={5} $c="#c0c5c9" $mt={26} $ml={4}>nsn</Label>
                  <Label $s={5} $c="#a9aeb3" $mt={14}>nsnsnr</Label>
                  <Label $s={5} $c="#c0c5c9" $mt={22} $ml={6}>nn</Label>
                  <Label $s={5} $c="#c0c5c9" $mt={15} $ml={1}>Tsnn</Label>
                  <Label $s={5} $c="#73797f" $b $mt={30} $ml={6}>nn</Label>
                </PlotAxis>
                <PlotArea><DarkChart /></PlotArea>
                <PlotRight>
                  <Label $s={5.5} $c="#c0c5c9">Tsnsnsnsn :</Label>
                  <Label $s={5.5} $c="#9ea4a9" $mt={23}>Dsnsnsnsnsn</Label>
                  <Label $s={5.5} $c="#9ea4a9" $mt={24}>Dsnsnsnsnsn</Label>
                  <Label $s={5.5} $c="#9ea4a9" $mt={24}>Lsnsnsn Tsn</Label>
                  <Label $s={5.5} $c="#9ea4a9" $mt={29}>Dsnsnsnsn</Label>
                  <Label $s={5.5} $c="#9ea4a9" $mt={26}>Dsnsnsnsn</Label>
                </PlotRight>
              </Plot>
              <Ticks>
                <Label $s={5.5} $c="#a9aeb3">Tsnnsn</Label>
                <Label $s={5.5} $c="#c0c5c9">nn Dn. sn</Label>
                <Label $s={5.5} $c="#d0d3d6">nsnsn nsn</Label>
                <Label $s={5.5} $c="#a9aeb3">Dsn Tsnsn</Label>
                <Label $s={5.5} $c="#a9aeb3">Tn_nsn</Label>
                <Label $s={5.5} $c="#a9aeb3">Tsn</Label>
              </Ticks>
              <LegendRow>
                <Label $s={6} $c="#b9bec2">Dsnsnsnsnsn</Label>
                <TealPill><Label $s={7} $c="#dff5f1">Tsn</Label></TealPill>
              </LegendRow>
            </ChartCard>

            <WideCard $w={384}>
              <WideTop>
                <Label $s={5.5} $c="#7c838a" $mt={1}>Hsnsn nsnsnsn nsn Tnsn sn</Label>
                <WideBrand>
                  <Label $s={7} $c="#b5bdae" $mt={9}>Cnsnnsnt</Label>
                  <BrandStamp><Label $s={5.5} $c="#a9aeb3">Dsnr</Label></BrandStamp>
                </WideBrand>
              </WideTop>
              <Tags>
                <Tag $w={32} $bg="#49b8a2"><Label $s={6} $c="#bcebe0">Csnsn</Label></Tag>
                <Tag $w={52} $bg="#d3d6d3"><Label $s={5.5} $c="#a3a9a5">Dsnsnsnnsnsnsn</Label></Tag>
                <Tag $w={38} $bg="#eceeed"><Label $s={5.5} $c="#c3c8c8">Dsnsnsnsn</Label></Tag>
              </Tags>
              <WidePlot>
                <AreaChart />
                <WideTicks>
                  <Label $s={5.5} $c="#a0a6ab">Dsnsnsnsn</Label>
                  <Label $s={5.5} $c="#a0a6ab">Dnsnsn</Label>
                  <Label $s={5.5} $c="#a0a6ab">Tnsnsn</Label>
                  <Label $s={5.5} $c="#a0a6ab">Tsnsnsn</Label>
                  <Label $s={5.5} $c="#a0a6ab">Lsnsn</Label>
                  <Label $s={5.5} $c="#a0a6ab">Dsnsn</Label>
                  <Label $s={5.5} $c="#a0a6ab">Csnsn</Label>
                  <Label $s={5.5} $c="#8a9096">Lsnsnsnsnsn</Label>
                  <Label $s={5.5} $c="#a0a6ab">Dsnsnsn</Label>
                  <Label $s={5.5} $c="#b5babe">Dsnsn</Label>
                  <Label $s={5.5} $c="#c8ccd0">Tsn</Label>
                </WideTicks>
              </WidePlot>
              <WideLegend>
                <LegendBox $w={75}><Label $s={6} $c="#6ca884">SGsn</Label><Label $s={5.5} $c="#a9aeb3" $ml={1}>snsnnsn Snsn.</Label></LegendBox>
                <LegendBox $w={134}><Label $s={5.5} $c="#a9aeb3">/ Lsnsnsn nsnsn snsnsn. Srnsn</Label></LegendBox>
              </WideLegend>
            </WideCard>
          </MidRow>

          <BottomRow>
            <InvoiceCard $w={225} $h={205} $mt={5}>
              <InvoiceHead>
                <Label $s={7.5} $c="#4d555d">Nsncsnmsnsns Dsnsnsnsnsnsn</Label>
                <Label $s={6} $c="#c0c5c9" $mt={-2}>Dsnsn Tsnsn</Label>
              </InvoiceHead>
              <ItemRow $h={10} $mt={13} $pr={42}>
                <Label $c="#7c838a">nd</Label>
                <Label $c="#6f767d">Dsnmsnsnsn.</Label>
                <Label $c="#6f767d">5nc</Label>
              </ItemRow>
              <ItemRow $h={10} $mt={6} $pr={42}>
                <Label $c="#7c838a">Rqoa</Label>
                <Thumb $w={15} $h={12} />
                <Label $c="#6f767d">5t0s</Label>
              </ItemRow>
              <ItemRow $h={13} $mt={7} $pr={42} $align="start">
                <Label $c="#7c838a" $mt={3}>Sqsn</Label>
                <IconRow>
                  <Thumb $w={15} $h={13} $mt={11} />
                  <Thumb $w={17} $h={13} $mt={11} />
                </IconRow>
                <span />
              </ItemRow>
              <ItemRow $h={7} $mt={10} $rule $pr={42} />
              <Label $s={5.5} $c="#b5babe" $mt={10}>Dsnsnsn nsn Nsnsnsnsnsnsn, Msnsnsnsn</Label>
              <Label $s={7} $c="#7c838a" $mt={17}>Hsnsnrnsnsnsn</Label>
              <ItemRow $h={10} $mt={13} $cols="100px 1fr auto" $pr={12}>
                <Label $s={7.5} $c="#7c838a" $ml={2}>Sfsnsn bsnsn</Label>
                <Label $s={5} $c="#d0d3d6" $ml={6}>Tsnsnsn nsn</Label>
                <Label $s={5} $c="#c0c5c9">Jn</Label>
              </ItemRow>
              <ItemRow $h={10} $mt={11} $cols="100px 1fr auto" $pr={12}>
                <Label $s={7.5} $c="#7c838a">Jsnrnc Dsnsn</Label>
                <Label $s={5} $c="#c0c5c9" $ml={-30}>Tnsn</Label>
                <Label $s={5} $c="#b5babe">nsn</Label>
              </ItemRow>
              <ItemRow $h={10} $mt={9} $cols="120px 1fr auto">
                <Label $s={7.5} $c="#7c838a">Nsnsnsnsn 1:</Label>
                <Label $s={6} $c="#7c838a">••</Label>
                <Label $s={5.5} $c="#9ea4a9">Lnsnsnsn.nt</Label>
              </ItemRow>
            </InvoiceCard>

            <StatementCard>
              <StatementHead>
                <div>
                  <Label $s={5.5} $c="#b5babe">Dsnnsn Lsnsn</Label>
                  <Label $s={9} $c="#5a636c" $mt={11} $ls={0.2}>Vorsa onsnonsnsn</Label>
                </div>
                <div>
                  <Label $s={6} $c="#a9aeb3" $ml={85}>×</Label>
                  <Label $s={7} $c="#6f767d" $mt={10}>Nsnsnsn Dsnrnsnsnsnsnsnsnsn</Label>
                </div>
              </StatementHead>
              <StatementBody>
                <DetailPanel>
                  <DetailLeft>
                    <Label $s={6} $c="#b0b5ba">Dsnsnsn Lsnsnsnsnsn Dsnsnsnsn</Label>
                    <Label $s={6} $c="#b0b5ba" $mt={24}>Nsnt Lsnrnsnsnsn</Label>
                    <Label $s={6} $c="#b0b5ba" $mt={27}>Nsnsn</Label>
                    <Label $s={6} $c="#b9bec2" $mt={30}>Rsnrnsnsn Lsnsnsnsn</Label>
                    <Label $s={6} $c="#b0b5ba" $mt={7}>Dsnsn. Nsnsn. Nsnsnsn. Nsn</Label>
                    <Label $s={6} $c="#a0a6ab" $mt={18}>Jsnrnsn Nsnsnsn Dsnsn</Label>
                  </DetailLeft>
                  <DetailRight>
                    <Label $s={5.5} $c="#c0c5c9" $ml={2}>Dsnsnsn Rsnrnsn</Label>
                    <Label $s={6.5} $c="#6f767d" $mt={9} $ml={2}>Dsnrnsn Bsnt Dsnsnsnsn.</Label>
                    <LevelBar $bg="#cbe3dc" $mt={4}>
                      <Label $s={6} $c="#9cbcb1">Tsnsnsn</Label>
                      <LevelEnd $bg="#5fa8a0" />
                    </LevelBar>
                    <Label $s={5.5} $c="#c0c5c9" $mt={8} $ml={155}>Dnsn.</Label>
                    <Label $s={5.5} $c="#a0a6ab" $mt={5} $ml={4}>Jsnmsn Nr Csn</Label>
                    <LevelBar $bg="#b5d6dc" $mt={6}>
                      <Label $s={6} $c="#8fb0b8">Nsnsnsn</Label>
                      <Label $s={6} $c="#96b6bc">Dn</Label>
                    </LevelBar>
                    <TealBlock />
                    <SmallRule />
                    <Label $s={5} $c="#a8d6b8" $mt={2} $ml={75}>Tsnsn</Label>
                    <MintBar><MintEnd /></MintBar>
                  </DetailRight>
                </DetailPanel>
                <SummaryPanel>
                  <SummaryRow $h={20} $rule>
                    <Tag $w={45} $h={12} $bg="#52bfb0"><Label $s={5} $c="#a5e3d8">Dsnsnsn nsnsnsn</Label></Tag>
                    <SummaryRight><Label $s={7} $c="#7c838a">Dsnsnsn</Label><Label $s={7} $c="#a9aeb3">1 Dsnn</Label></SummaryRight>
                  </SummaryRow>
                  <SummaryRow $h={40} $rule>
                    <div>
                      <Label $s={5} $c="#d0d3d6" $mt={5}>Dsnsnsn</Label>
                      <SummaryLeft>
                        <Label $s={5.5} $c="#b9bec2" $mt={9}>Dsnsnsn nsnsnsn</Label>
                        <Tag $w={12} $h={7} $bg="#bde5d3" $mt={8}><Label $s={4} $c="#8cc7aa">nn</Label></Tag>
                      </SummaryLeft>
                    </div>
                    <SummaryRight $gap={10}><Label $s={7} $c="#7c838a" $mt={16}>Nsnsnsnsn</Label><Label $s={7} $c="#a9aeb3" $mt={16}>Nsnsn</Label></SummaryRight>
                  </SummaryRow>
                  <SummaryRow $h={40} $rule>
                    <div>
                      <Label $s={6.5} $c="#6f767d" $mt={2}>Tsnsn Dsnsnsnsnsn Nsn</Label>
                      <Label $s={5} $c="#c0c5c9" $mt={3}>Dsn nsnsn nsn nsnsn</Label>
                      <Tag $w={57} $h={11} $bg="#8a8c90" $mt={11}><Label $s={5} $c="#b5b6ba">Dsnsn nsnsn Dsnsnsn</Label></Tag>
                    </div>
                    <SummaryStack>
                      <Label $s={7} $c="#7c838a" $mr={31}>Dsnsnsnsn</Label>
                      <Label $s={7} $c="#a9aeb3" $mt={13}>5.5.8</Label>
                      <Label $s={5} $c="#c8ccd0" $mt={5} $mr={42}>Tsnsn</Label>
                    </SummaryStack>
                  </SummaryRow>
                  <SummaryRow $h={33} $rule>
                    <div>
                      <Label $s={7} $c="#c0c5c9" $mt={3}>1</Label>
                      <Label $s={5} $c="#c0c5c9" $mt={13}>Dsn nsn nsnsnsnsn nsnsn</Label>
                    </div>
                    <SummaryRight $gap={11}>
                      <Label $s={7} $c="#7c838a" $mt={20}>Nsnsnsn3Dsn</Label>
                      <Label $s={7} $c="#a9aeb3" $mt={20}>Dsn</Label>
                    </SummaryRight>
                  </SummaryRow>
                </SummaryPanel>
              </StatementBody>
            </StatementCard>
          </BottomRow>
        </Rows>
      </Main>

      <Footer>
        <FooterLogo><Label $s={7} $c="#a9e4c7" $b>n</Label></FooterLogo>
        <Label $s={10.5} $c="#aab3bd" $ls={0.2}>otrUvitntoirs</Label>
        <FooterRight>
          <Label $s={8} $c="#8d98a4">ESCSLsnsn</Label>
          <Label $s={8} $c="#aab3bd">Exlsnsnrtsn 9</Label>
        </FooterRight>
      </Footer>
    </Page>
  )
}
